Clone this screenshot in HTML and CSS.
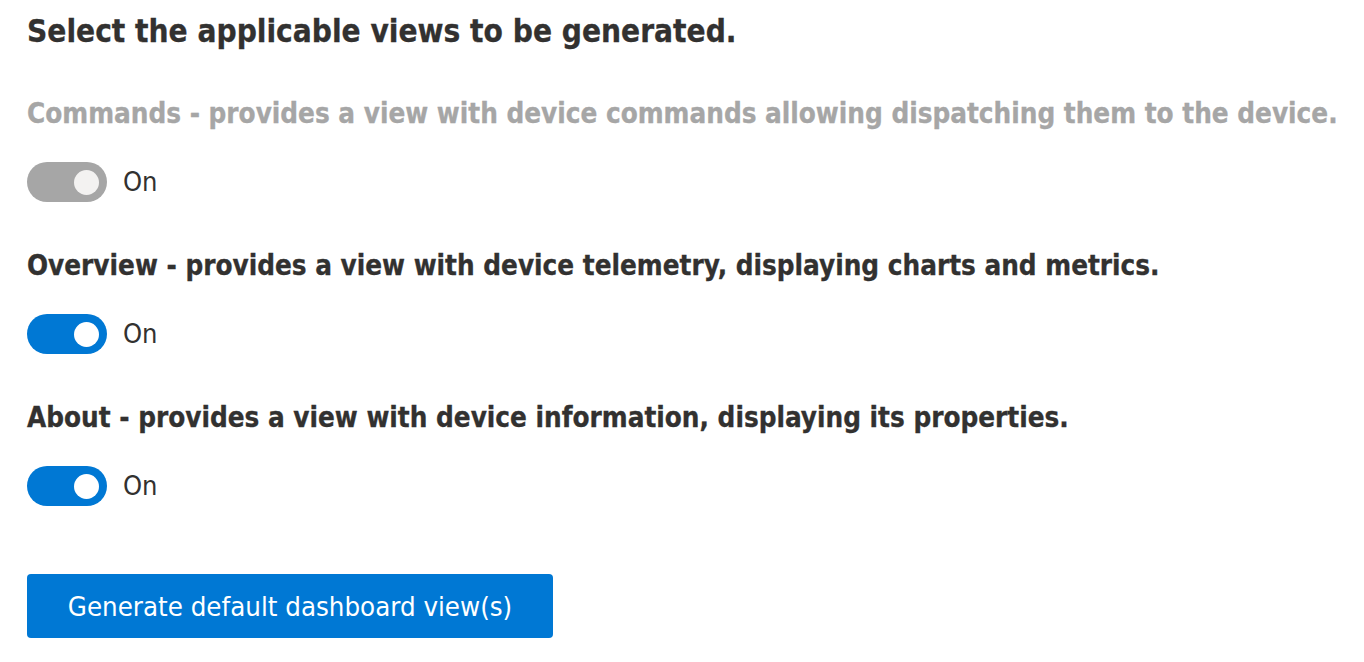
FILE: index.html
```html
<!DOCTYPE html>
<html lang="en">
<head>
<meta charset="utf-8">
<title>Generate views</title>
<link rel="stylesheet" href="styles.css">
</head>
<body>
<main class="page">
  <h1 class="title">Select the applicable views to be generated.</h1>
  <div class="options">
    <div class="option">
      <div class="label is-disabled">Commands - provides a view with device commands allowing dispatching them to the device.</div>
      <div class="toggle-row">
        <span class="toggle is-disabled"><span class="thumb"></span></span>
        <span class="state">On</span>
      </div>
    </div>
    <div class="option">
      <div class="label">Overview - provides a view with device telemetry, displaying charts and metrics.</div>
      <div class="toggle-row">
        <span class="toggle"><span class="thumb"></span></span>
        <span class="state">On</span>
      </div>
    </div>
    <div class="option">
      <div class="label">About - provides a view with device information, displaying its properties.</div>
      <div class="toggle-row">
        <span class="toggle"><span class="thumb"></span></span>
        <span class="state">On</span>
      </div>
    </div>
  </div>
  <div class="actions">
    <button class="primary-btn" type="button">Generate default dashboard view(s)</button>
  </div>
</main>
</body>
</html>
```

FILE: styles.css
```css
html, body {
  margin: 0;
  padding: 0;
  background: #ffffff;
}

.page {
  padding: 11px 27px 0 27px;
  display: flex;
  flex-direction: column;
  font-family: "DejaVu Sans Condensed", "DejaVu Sans", sans-serif;
  color: #323130;
}

.title {
  margin: 0;
  font-size: 31.3px;
  line-height: 40px;
  font-weight: 700;
  color: #323130;
  white-space: nowrap;
  -webkit-text-stroke: 0.3px #323130;
}

.options {
  margin-top: 43px;
  display: flex;
  flex-direction: column;
  gap: 44px;
}

.option {
  display: flex;
  flex-direction: column;
  gap: 28px;
}

.label {
  font-size: 27.6px;
  line-height: 40px;
  font-weight: 700;
  color: #323130;
  white-space: nowrap;
  -webkit-text-stroke: 0.3px #323130;
}

.label.is-disabled {
  color: #a6a6a6;
  -webkit-text-stroke: 0.3px #a6a6a6;
}

.toggle-row {
  display: flex;
  align-items: center;
  gap: 16px;
  height: 40px;
}

.toggle {
  width: 80px;
  height: 40px;
  box-sizing: border-box;
  border-radius: 20px;
  background: #0078d4;
  display: flex;
  align-items: center;
  justify-content: flex-end;
  padding-right: 8px;
}

.toggle.is-disabled {
  background: #a6a6a6;
}

.thumb {
  width: 25px;
  height: 25px;
  border-radius: 50%;
  background: #ffffff;
}

.toggle.is-disabled .thumb {
  background: #f3f2f1;
}

.state {
  font-size: 27px;
  line-height: 40px;
  color: #323130;
}

.actions {
  margin-top: 68px;
  display: flex;
}

.primary-btn {
  height: 64px;
  width: 526px;
  border: none;
  border-radius: 4px;
  background: #0078d4;
  color: #ffffff;
  font-family: "DejaVu Sans Condensed", "DejaVu Sans", sans-serif;
  font-size: 27.4px;
  padding: 0;
  cursor: pointer;
}
```
